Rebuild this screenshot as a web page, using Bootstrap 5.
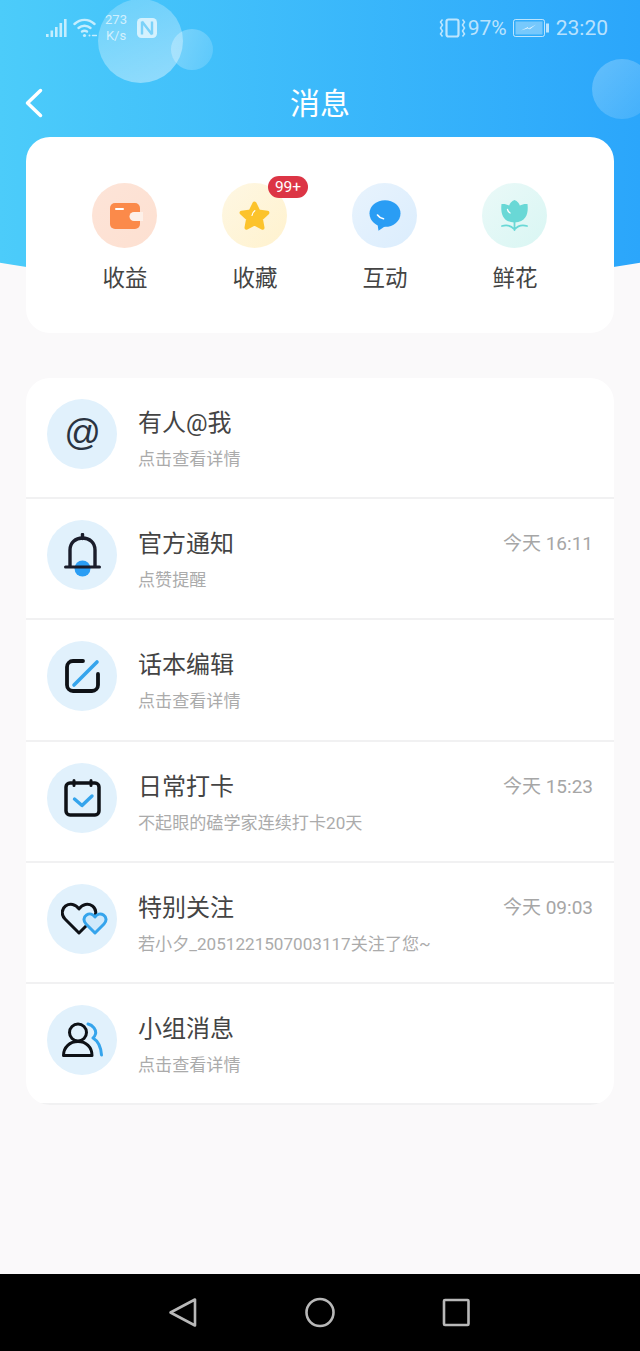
<!DOCTYPE html>
<html lang="zh-CN">
<head>
  <meta charset="UTF-8" />
  <meta name="viewport" content="width=device-width, initial-scale=1.0"/>
  <title>消息</title>
  <link href="https://cdn.jsdelivr.net/npm/bootstrap@5.3.0/dist/css/bootstrap.min.css" rel="stylesheet"/>
  <style>
    body {
      background-color: #faf9fa;
      color: #333;
      font-family: Roboto, "Noto Sans CJK SC", sans-serif;
      width: 640px;
      height: 1351px;
      overflow: hidden;
    }
    .phone { height: 1351px; }
    .page-main { position: relative; height: 1274px; overflow: hidden; }
    .hero-bg {
      position: absolute; top: 0; left: -150px; width: 940px; height: 286px;
      border-radius: 0 0 50% 50% / 0 0 87px 87px;
      background: linear-gradient(90deg, #4cccfa 0%, #4cccfa 150px, #2ba6fb 790px, #2ba6fb 100%);
    }
    .bubble { position: absolute; border-radius: 50%; }
    .bubble-a { left: 98px; top: -1px; width: 85px; height: 84px; background: linear-gradient(160deg, rgba(255,255,255,.2), rgba(255,255,255,.42)); }
    .bubble-b { left: 171px; top: 29px; width: 42px; height: 41px; background: linear-gradient(110deg, rgba(255,255,255,.3), rgba(255,255,255,.14)); }
    .bubble-c { left: 592px; top: 59px; width: 60px; height: 60px; background: linear-gradient(135deg, rgba(255,255,255,.26), rgba(255,255,255,.1)); }
    .content-layer { position: relative; }
    .status-row { height: 54px; padding: 12px 32px 0 46px; color: rgba(255,255,255,.68); }
    .status-group { height: 32px; }
    .wifi-icon { margin-left: 6px; }
    .net-speed { font-size: 13px; line-height: 16px; width: 26px; text-align: center; margin: 0 8px 0 6px; }
    .status-text { font-size: 21px; line-height: 30px; }
    .pct-text { margin-left: 2px; }
    .batt-icon { margin: 0 7px 0 6px; }
    .top-title { height: 83px; padding: 16px 26px 0; position: relative; color: #fff; }
    .top-title h1 { font-size: 30px; font-weight: 400; margin: 0; width: 100%; text-align: center; }
    .back-btn { position: absolute; left: 24px; top: 33px; }
    .shortcut-box {
      margin: 0 26px; height: 196px; background: #fff; border-radius: 24px;
      padding-top: 46px;
    }
    .shortcut { width: 130px; }
    .shortcut-icon { position: relative; width: 65px; height: 65px; border-radius: 50%; margin-right: 1px; }
    .shortcut-label { font-size: 22.5px; line-height: 30px; margin-top: 15px; color: #444; }
    .tone-orange { background: linear-gradient(135deg, #fde4d8, #fde0d1); }
    .tone-yellow { background: linear-gradient(135deg, #fef7e3, #fff2ce); }
    .tone-blue { background: linear-gradient(135deg, #e8f3fd, #dbedfd); }
    .tone-teal { background: linear-gradient(135deg, #eaf9f8, #d9f6f3); }
    .count-pill {
      position: absolute; left: 46px; top: -7px; width: 40px; height: 22px;
      border-radius: 11px; background: #dc3545; color: #fff;
      font-size: 15.5px; line-height: 22px; text-align: center; font-weight: 400; padding: 0;
    }
    .msg-box {
      margin: 45px 26px 0; background: #fff; border-radius: 24px; overflow: hidden;
      height: 727px;
    }
    .msg-row { height: 121.2px; padding: 21px 21px 0 21px; border-bottom: 2px solid #f1f1f2; }
    .msg-icon { width: 70px; height: 70px; border-radius: 50%; background: #e1f1fc; flex: none; }
    .at-glyph { font-family: "Liberation Sans", sans-serif; font-style: italic; font-size: 36px; line-height: 1; color: #2a3340; margin-top: -3px; }
    .msg-body { margin-left: 21px; min-width: 0; }
    .msg-title { font-size: 24px; line-height: 32px; color: #444; margin-top: 8px; }
    .msg-sub { font-size: 17.1px; line-height: 24px; color: #ababab; margin-top: 8px; white-space: nowrap; }
    .msg-time { font-size: 19px; line-height: 28px; color: #a6a6a6; margin-top: 10px; white-space: nowrap; }
    .nav-strip { height: 77px; background: #000; }
  </style>
</head>
<body>
<div class="phone">
  <div class="page-main">
    <div class="hero-bg"></div>
    <div class="bubble bubble-a"></div>
    <div class="bubble bubble-b"></div>
    <div class="bubble bubble-c"></div>

    <div class="content-layer">
      <div class="status-row d-flex justify-content-between align-items-start">
        <div class="status-group d-flex align-items-center">
          <svg width="21" height="20" viewBox="0 0 21 20" fill="currentColor">
            <rect x="0" y="16" width="2.600" height="3"/><rect x="4.500" y="12.500" width="2.600" height="6.500"/><rect x="9" y="9" width="2.600" height="10"/><rect x="13.500" y="5" width="2.600" height="14"/><rect x="18" y="1" width="2.600" height="18"/>
          </svg>
          <svg class="wifi-icon" width="24" height="20" viewBox="0 0 24 20" fill="none" stroke="currentColor" stroke-width="2.400" stroke-linecap="round">
            <path d="M1.500 6C7.500 .5 15.500 .5 21.500 6"/><path d="M5.500 10C9 7 14 7 17.500 10"/><path d="M9 13.500C10.500 12.500 12.500 12.500 14 13.500"/>
            <circle cx="11.500" cy="17.500" r="1.600" fill="currentColor" stroke="none"/><circle cx="16.500" cy="17.500" r="1" fill="currentColor" stroke="none"/><path d="M19.500 17.500h4" stroke-width="1.500"/>
          </svg>
          <div class="net-speed">273<br/>K/s</div>
          <svg width="20" height="20" viewBox="0 0 20 20">
            <rect x="0" y="0" width="20" height="20" rx="4.500" fill="currentColor"/>
            <path d="M5 3.500v13M5 3.500l10 13M15 3.500v13" fill="none" stroke="#7bd2f9" stroke-width="2.400"/>
          </svg>
        </div>
        <div class="status-group d-flex align-items-center">
          <svg width="27" height="20" viewBox="0 0 27 20" fill="none" stroke="currentColor" stroke-width="2.200">
            <rect x="7.500" y="1.500" width="12" height="17" rx="2"/>
            <path d="M3.500 1.500l-2 2.500 2 3-2 3 2 3-2 3 2 2.500M23.500 1.500l2 2.500-2 3 2 3-2 3 2 3-2 2.500" stroke-width="1.500"/>
          </svg>
          <span class="status-text pct-text">97%</span>
          <svg class="batt-icon" width="36" height="18" viewBox="0 0 36 18">
            <rect x="0.500" y="0.500" width="31" height="17" rx="2" fill="none" stroke="currentColor"/>
            <rect x="2.500" y="2.500" width="27" height="13" fill="currentColor" opacity=".5"/>
            <rect x="33" y="4.500" width="3" height="9" fill="currentColor"/>
            <path d="M8 11.500l7-3.500v2l8-4.500-6.500 5v-1.800z" fill="#eaf7ff"/>
          </svg>
          <span class="status-text">23:20</span>
        </div>
      </div>

      <div class="top-title d-flex align-items-center">
        <svg class="back-btn" width="20" height="32" viewBox="0 0 20 32" fill="none" stroke="#fff" stroke-width="3.500" stroke-linecap="round" stroke-linejoin="round">
          <path d="M16.500 3.500L3.500 16l13 12.500"/>
        </svg>
        <h1>消息</h1>
      </div>

      <div class="shortcut-box d-flex justify-content-center">
        <div class="shortcut d-flex flex-column align-items-center">
          <div class="shortcut-icon tone-orange d-flex align-items-center justify-content-center">
            <svg class="ms-1" width="33" height="26" viewBox="0 0 33 26">
              <rect x="0" y="0" width="30" height="26" rx="5" fill="#fb8a4a"/>
              <rect x="5" y="5" width="9" height="2" rx="1" fill="#fff"/>
              <path d="M33 9h-9a4.500 4.500 0 0 0 0 9h9z" fill="#fdf0e8"/>
            </svg>
          </div>
          <div class="shortcut-label">收益</div>
        </div>
        <div class="shortcut d-flex flex-column align-items-center">
          <div class="shortcut-icon tone-yellow d-flex align-items-center justify-content-center">
            <svg width="31" height="31" viewBox="0 0 31 31">
              <path d="M15.500 3.500l3.900 8 9 1.200-6.500 6.200 1.600 8.800-8-4.200-8 4.200 1.600-8.800-6.500-6.200 9-1.200z" fill="#fcc32c" stroke="#fcc32c" stroke-width="4" stroke-linejoin="round"/>
              <path d="M13 15.500c.3-2.200 1.300-3.800 2.800-4.800" fill="none" stroke="#fff" stroke-width="1.200" stroke-linecap="round"/>
            </svg>
            <span class="badge count-pill">99+</span>
          </div>
          <div class="shortcut-label">收藏</div>
        </div>
        <div class="shortcut d-flex flex-column align-items-center">
          <div class="shortcut-icon tone-blue d-flex align-items-center justify-content-center">
            <svg width="32" height="31" viewBox="0 0 32 31">
              <ellipse cx="16" cy="13.500" rx="15.500" ry="13.300" fill="#2a9df4"/>
              <path d="M8.500 24l1 6.800 8-5.500z" fill="#2a9df4"/>
              <path d="M8.500 15c1.500 2.200 3.500 3.300 6 3.800" fill="none" stroke="#fff" stroke-width="1.600" stroke-linecap="round"/>
            </svg>
          </div>
          <div class="shortcut-label">互动</div>
        </div>
        <div class="shortcut d-flex flex-column align-items-center">
          <div class="shortcut-icon tone-teal d-flex align-items-center justify-content-center">
            <svg width="27" height="31" viewBox="0 0 27 31">
              <path d="M13.500 0c3 1.300 4.800 3.300 5.300 5.500 2.300-1.300 5-1.800 7.700-1.500.8 7 .3 18-13 18.500C.2 22-.3 11 .5 4c2.700-.3 5.400.2 7.700 1.500C8.700 3.300 10.500 1.300 13.500 0z" fill="#69d8d6"/>
              <path d="M6.500 9.500c.3 1.500 1.300 2.800 2.600 3.500" fill="none" stroke="#fff" stroke-width="1.300" stroke-linecap="round"/>
              <path d="M13.500 22v8M1 26c5-1.500 9.500 0 12.500 3.500C16.500 26 21 24.500 26 26" fill="none" stroke="#69d8d6" stroke-width="1.800" stroke-linecap="round"/>
            </svg>
          </div>
          <div class="shortcut-label">鲜花</div>
        </div>
      </div>

      <div class="msg-box">
        <div class="msg-row d-flex">
          <div class="msg-icon d-flex align-items-center justify-content-center">
            <span class="at-glyph">@</span>
          </div>
          <div class="msg-body flex-grow-1">
            <div class="msg-title">有人@我</div>
            <div class="msg-sub">点击查看详情</div>
          </div>
        </div>
        <div class="msg-row d-flex">
          <div class="msg-icon d-flex align-items-center justify-content-center">
            <svg width="37" height="44" viewBox="0 0 37 44">
              <circle cx="18.500" cy="35.500" r="8" fill="#2a9df4"/>
              <path d="M6 34V17C6 9.500 11.500 5 18.500 5S31 9.500 31 17v17" fill="none" stroke="#1a1d2b" stroke-width="3.400"/>
              <path d="M1.500 34h34" fill="none" stroke="#1a1d2b" stroke-width="3" stroke-linecap="round"/>
              <path d="M18.500 1.500v4" fill="none" stroke="#1a1d2b" stroke-width="3.400" stroke-linecap="round"/>
            </svg>
          </div>
          <div class="msg-body flex-grow-1">
            <div class="msg-title">官方通知</div>
            <div class="msg-sub">点赞提醒</div>
          </div>
          <div class="msg-time">今天 16:11</div>
        </div>
        <div class="msg-row d-flex">
          <div class="msg-icon d-flex align-items-center justify-content-center">
            <svg width="35" height="34" viewBox="0 0 35 34" fill="none" stroke-linecap="round">
              <path d="M18 2H8a6 6 0 0 0-6 6v18a6 6 0 0 0 6 6h19a6 6 0 0 0 6-6V15" stroke="#0e1116" stroke-width="3.800"/>
              <path d="M9 26L32 3" stroke="#35a4ec" stroke-width="3.600"/>
            </svg>
          </div>
          <div class="msg-body flex-grow-1">
            <div class="msg-title">话本编辑</div>
            <div class="msg-sub">点击查看详情</div>
          </div>
        </div>
        <div class="msg-row d-flex">
          <div class="msg-icon d-flex align-items-center justify-content-center">
            <svg width="37" height="38" viewBox="0 0 37 38" fill="none" stroke-linecap="round" stroke-linejoin="round">
              <rect x="2" y="4" width="33" height="32" rx="4" stroke="#0e1116" stroke-width="3.500"/>
              <path d="M10 1.500v5M27 1.500v5" stroke="#0e1116" stroke-width="3"/>
              <path d="M10.500 20l7.500 6.500 10-9.500" stroke="#35a4ec" stroke-width="3.400"/>
            </svg>
          </div>
          <div class="msg-body flex-grow-1">
            <div class="msg-title">日常打卡</div>
            <div class="msg-sub">不起眼的磕学家连续打卡20天</div>
          </div>
          <div class="msg-time">今天 15:23</div>
        </div>
        <div class="msg-row d-flex">
          <div class="msg-icon d-flex align-items-center justify-content-center">
            <svg class="ms-1" width="47" height="33" viewBox="0 0 47 33" fill="none" stroke-linejoin="round">
              <path d="M18 31L4 17C0 13 .5 7 4.500 4 9 1 14.500 2 18 7c3.500-5 9-6 13.500-3 4 3 4.500 9 .5 13z" stroke="#0e1116" stroke-width="3"/>
              <path d="M34 31l-9-9c-3-3-2.500-7 .5-9 3-2 6.500-1 8.500 2 2-3 5.500-4 8.500-2 3 2 3.500 6 .5 9z" fill="#cfe9fb" stroke="#35a4ec" stroke-width="3"/>
            </svg>
          </div>
          <div class="msg-body flex-grow-1">
            <div class="msg-title">特别关注</div>
            <div class="msg-sub">若小夕_2051221507003117关注了您~</div>
          </div>
          <div class="msg-time">今天 09:03</div>
        </div>
        <div class="msg-row d-flex">
          <div class="msg-icon d-flex align-items-center justify-content-center">
            <svg width="41" height="35" viewBox="0 0 41 35" fill="none" stroke-linecap="round" stroke-linejoin="round">
              <circle cx="16" cy="10.500" r="8.500" stroke="#0e1116" stroke-width="3"/>
              <path d="M1.500 33.500C1.500 25 8 19.500 16 19.500S30 25 30 33.500z" stroke="#0e1116" stroke-width="3"/>
              <path d="M26 2c5 1 8.500 6 7.500 10-.5 2-1.500 3-2.500 4 5 3 8 10 8.500 17" stroke="#35a4ec" stroke-width="3"/>
            </svg>
          </div>
          <div class="msg-body flex-grow-1">
            <div class="msg-title">小组消息</div>
            <div class="msg-sub">点击查看详情</div>
          </div>
        </div>
      </div>
    </div>
  </div>

  <div class="nav-strip d-flex align-items-center justify-content-center">
    <svg width="320" height="32" viewBox="0 0 320 32" fill="none" stroke="#b8b8b8" stroke-width="2.600" stroke-linejoin="round">
      <path d="M10.500 15.500L35 2.500v26z"/>
      <circle cx="160" cy="15.500" r="13.500"/>
      <rect x="284" y="3" width="24.500" height="25" rx="1"/>
    </svg>
  </div>
</div>
<script src="https://cdn.jsdelivr.net/npm/bootstrap@5.3.0/dist/js/bootstrap.bundle.min.js"></script>
</body>
</html>
